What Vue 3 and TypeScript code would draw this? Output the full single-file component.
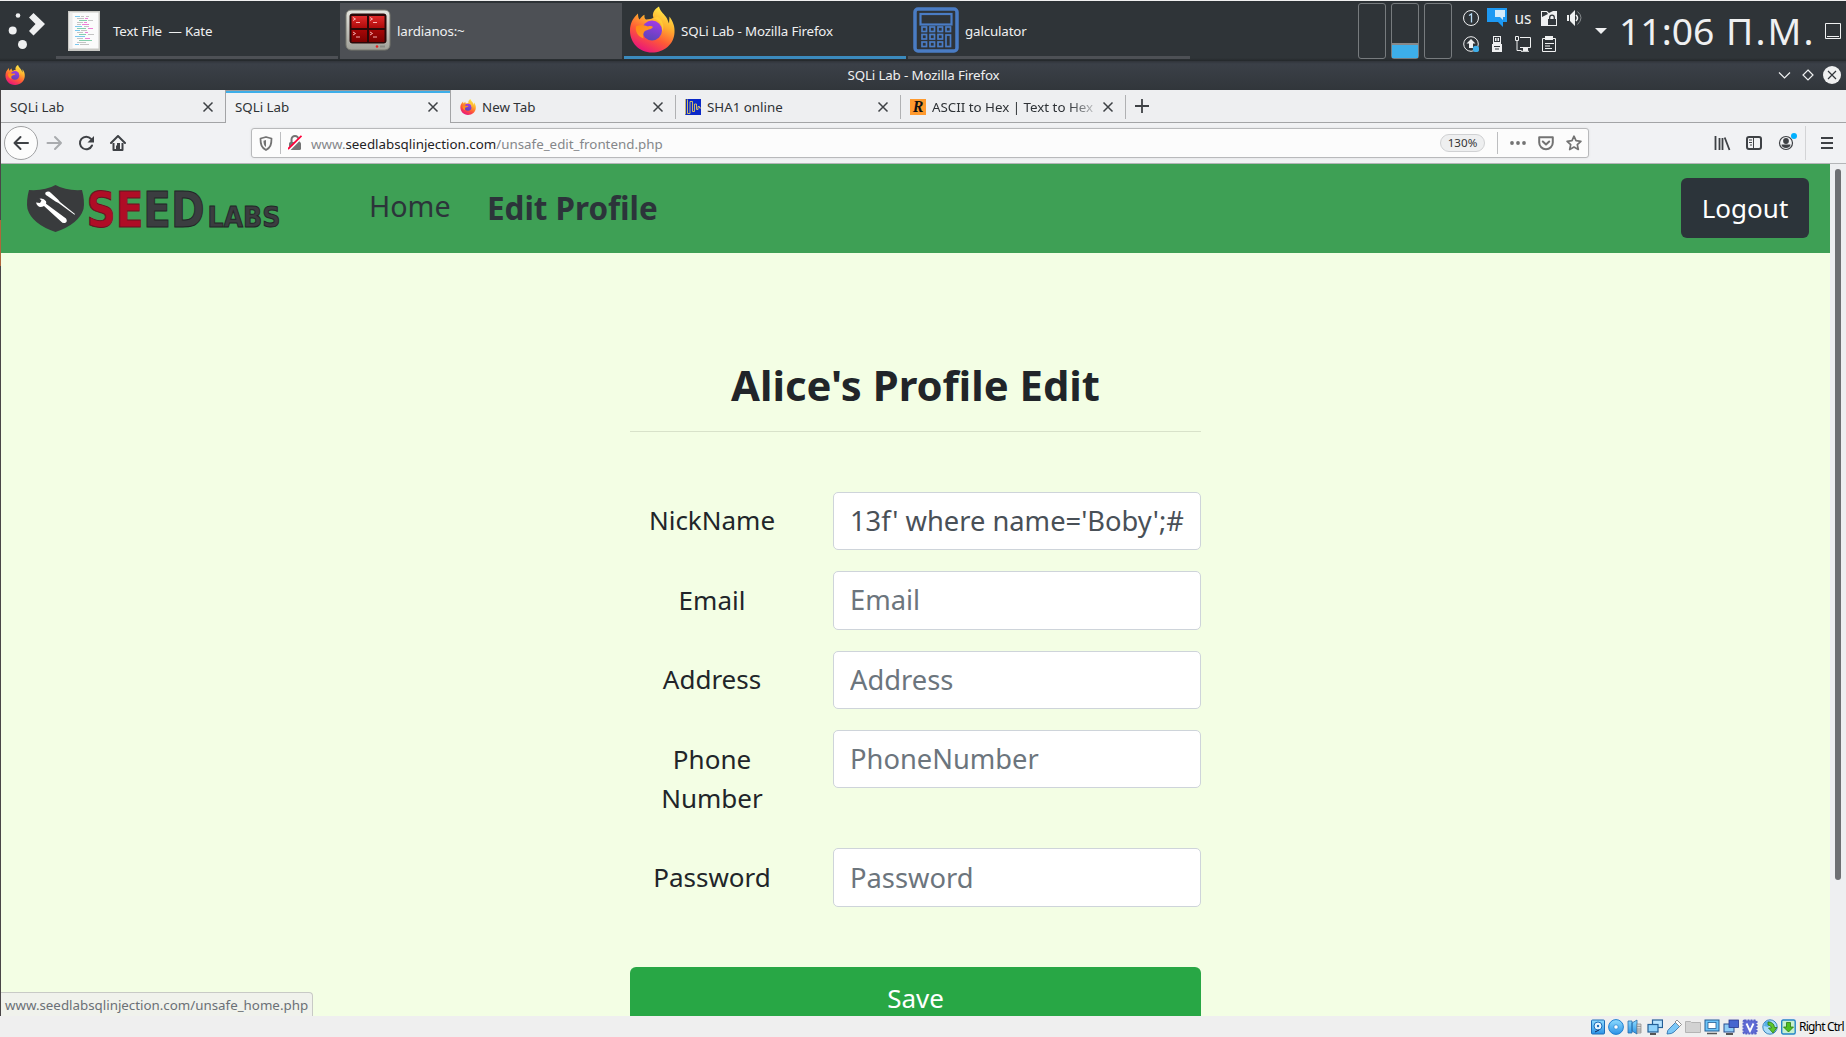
<script setup lang="ts">
import { ref } from 'vue'

interface Tab {
  title: string
  icon?: 'firefox' | 'wave' | 'rapid'
  active?: boolean
  faded?: boolean
}

interface Field {
  label: string
  placeholder: string
  value: string
}

const tabs: Tab[] = [
  { title: 'SQLi Lab' },
  { title: 'SQLi Lab', active: true },
  { title: 'New Tab', icon: 'firefox' },
  { title: 'SHA1 online', icon: 'wave' },
  { title: 'ASCII to Hex | Text to Hex', icon: 'rapid', faded: true },
]

const fields = ref<Field[]>([
  { label: 'NickName', placeholder: 'NickName', value: "13f' where name='Boby';#" },
  { label: 'Email', placeholder: 'Email', value: '' },
  { label: 'Address', placeholder: 'Address', value: '' },
  { label: 'Phone Number', placeholder: 'PhoneNumber', value: '' },
  { label: 'Password', placeholder: 'Password', value: '' },
])

const editorTask = 'Text File  — Kate'

const keyRows = [22, 29.5, 37]
const keyCols = [10, 18, 26, 34]

// [x, y, width, colour] of each code line on the document icon
const docLines: [number, number, number, string][] = [
  [7, 5, 5, '#7cc8ee'], [13, 5, 3, '#c4c4c4'], [18, 5, 3, '#c4c4c4'],
  [9, 7, 7, '#c4c4c4'], [17, 7, 3, '#ee7fd6'],
  [11, 9, 8, '#85cfae'], [20, 9, 5, '#c4c4c4'],
  [9, 11, 6, '#c4c4c4'], [16, 11, 3, '#ee7fd6'],
  [9, 13, 4, '#c4c4c4'], [14, 13, 7, '#ee7fd6'],
  [7, 15, 7, '#7cc8ee'], [16, 15, 5, '#c4c4c4'],
  [9, 17, 9, '#85cfae'], [20, 17, 5, '#ee7fd6'],
  [7, 19, 5, '#7cc8ee'], [13, 19, 6, '#c4c4c4'],
  [9, 21, 6, '#c4c4c4'], [17, 21, 3, '#ee7fd6'],
  [11, 23, 7, '#85cfae'], [20, 23, 6, '#c4c4c4'],
  [7, 25, 10, '#7cc8ee'],
  [9, 27, 6, '#c4c4c4'], [17, 27, 5, '#ee7fd6'],
  [11, 29, 13, '#85cfae'],
  [9, 31, 9, '#c4c4c4'],
  [7, 33, 4, '#7cc8ee'], [12, 33, 9, '#c4c4c4'],
]
</script>

<template>
  <div class="desktop">
    <svg class="defs" width="0" height="0" aria-hidden="true">
      <defs>
        <linearGradient id="fxBody" x1="0.8" y1="0" x2="0.3" y2="1">
          <stop offset="0" stop-color="#fff44f" />
          <stop offset="0.35" stop-color="#ffb02e" />
          <stop offset="0.65" stop-color="#ff5a36" />
          <stop offset="1" stop-color="#e8117f" />
        </linearGradient>
        <linearGradient id="fxGlobe" x1="0.7" y1="0" x2="0.4" y2="1">
          <stop offset="0" stop-color="#a33ae8" />
          <stop offset="1" stop-color="#5a45b8" />
        </linearGradient>
        <linearGradient id="fxHead" x1="0" y1="0" x2="1" y2="1">
          <stop offset="0" stop-color="#ff8a16" />
          <stop offset="1" stop-color="#ff9a2a" />
        </linearGradient>
        <linearGradient id="redScreen" x1="0" y1="0" x2="0" y2="1">
          <stop offset="0" stop-color="#e02a2a" />
          <stop offset="0.5" stop-color="#a80808" />
          <stop offset="1" stop-color="#7c0000" />
        </linearGradient>
        <linearGradient id="bezel" x1="0" y1="0" x2="0" y2="1">
          <stop offset="0" stop-color="#e6e6e0" />
          <stop offset="1" stop-color="#a0a098" />
        </linearGradient>
        <linearGradient id="vmBlue" x1="0" y1="0" x2="0" y2="1">
          <stop offset="0" stop-color="#8fdcff" />
          <stop offset="1" stop-color="#2b93e6" />
        </linearGradient>
        <symbol id="firefox" viewBox="0 0 46 46">
          <path d="M23 46C10 46 1 36 1 24C1 17 4 12 7 9L9 7C9 10 9.500 12 10.500 13C12 11 13.500 9 15.500 8.200C15.300 10.500 15.500 12 17 13C20 12.500 23 12.500 24.500 11C22.500 7 26 2 30 0C31 5 36 8 38 12L40 17L40.500 10C44 15 46 20 45.500 26C45 38 35 46 23 46Z" fill="url(#fxBody)" />
          <circle cx="23" cy="24" r="10" fill="url(#fxGlobe)" />
          <path d="M7 20C11 18 16 19 19 20C21 19 23.500 20 24 20.500C22.500 23 19 23 17 24C14 25 14 29 14.500 32C9 30 6 25 7 20Z" fill="url(#fxHead)" />
          <path d="M24.500 12C30 13 34 18 33 25C36 21 34 13 28 10Z" fill="#ffd03a" opacity=".8" />
        </symbol>
      </defs>
    </svg>

    <header class="panel">
      <svg class="launcher" width="38" height="40" viewBox="0 0 38 40" fill="#eff0f1">
        <circle cx="10" cy="5.500" r="2.300" />
        <circle cx="4.700" cy="20.500" r="4" />
        <circle cx="14.500" cy="34.500" r="4.500" />
        <path d="M25.500 3L37 14L25.500 25.500L21 21L27.500 14L21 7.500Z" />
      </svg>

      <nav class="tasks">
        <div class="task">
          <span class="task-icon">
            <svg class="doc" width="32" height="40" viewBox="0 0 32 40">
              <rect width="32" height="40" fill="#c9c9c5" />
              <rect x="1.500" y="1.500" width="29" height="36" fill="#fbfbfb" />
              <rect x="1.500" y="1.500" width="3" height="36" fill="#ececec" />
              <rect v-for="(l, i) in docLines" :key="i" :x="l[0]" :y="l[1]" :width="l[2]" height="1" :fill="l[3]" />
            </svg>
          </span>
          <span class="task-text pre">{{ editorTask }}</span>
        </div>
        <div class="task raised">
          <span class="task-icon">
            <svg width="46" height="42" viewBox="0 0 46 42">
              <rect x="1" y="1" width="44" height="40" rx="5" fill="url(#bezel)" stroke="#77776f" />
              <rect x="4.500" y="4.500" width="37" height="30" rx="3" fill="#2a0808" />
              <path d="M6.500 7h15.500v12H6.500zM24 7h15.500v12H24zM6.500 21h15.500v12H6.500zM24 21h15.500v12H24z" fill="url(#redScreen)" />
              <g stroke="#ffc4c4" stroke-width=".9" fill="none">
                <path d="M8 8.500l2.500 1.500-2.500 1.500M11 13.500h4M25 8.500l2.500 1.500-2.500 1.500M28 13.500h4M8 23l2.500 1.500-2.500 1.500M11 28h4M25 23l2.500 1.500-2.500 1.500M28 28h4" />
              </g>
              <circle cx="32" cy="37.500" r="1.300" fill="#e82020" />
              <rect x="35" y="36.500" width="5" height="2" fill="#8a8a84" />
            </svg>
          </span>
          <span class="task-text">lardianos:~</span>
        </div>
        <div class="task current">
          <span class="task-icon"><svg width="46" height="47"><use href="#firefox" /></svg></span>
          <span class="task-text">SQLi Lab - Mozilla Firefox</span>
        </div>
        <div class="task">
          <span class="task-icon">
            <svg width="46" height="46" viewBox="0 0 46 46" fill="none" stroke="#4a7cc4">
              <rect x="2" y="2" width="42" height="42" rx="3" stroke-width="3.500" />
              <rect x="7.500" y="7" width="31" height="10.500" stroke-width="2.200" />
              <template v-for="y in keyRows" :key="y">
                <template v-for="x in keyCols" :key="x">
                  <rect v-if="x < 34 || y === 22" :x="x - 1" :y="y - 2" width="4.500" height="4.500" stroke-width="1.700" />
                </template>
              </template>
              <rect x="33" y="28" width="4.500" height="11.500" stroke-width="1.700" />
            </svg>
          </span>
          <span class="task-text">galculator</span>
        </div>
      </nav>

      <div class="monitors">
        <div class="monitor"></div>
        <div class="monitor"><span class="level"></span></div>
        <div class="monitor"></div>
      </div>

      <div class="tray">
        <svg width="16" height="16" viewBox="0 0 16 16" fill="none" stroke="#eff0f1">
          <circle cx="8" cy="8" r="7.500" />
          <path d="M6 5.500L8.500 4V12.500" stroke="#b8dcf5" stroke-width="1.300" />
        </svg>
        <svg width="20" height="20" viewBox="0 0 20 20">
          <path d="M0 0h20v14h-4v5l-5-5H0z" fill="#1d99f3" />
          <path d="M8 2h10v7h-2v3l-3-3H8z" fill="#d3ebfb" />
        </svg>
        <span class="kbd">us</span>
        <svg width="16" height="16" viewBox="0 0 16 16">
          <path d="M0 1h6l2 2 4-2h4v15H0z" fill="#eff0f1" />
          <path d="M1 2h4.500l1.500 2-6 3z" fill="#31363b" />
          <path d="M7 9h8v6H7z" fill="#31363b" />
          <path d="M8.700 9V7.500a2.300 2.300 0 0 1 4.600 0V9" fill="#eff0f1" stroke="#31363b" stroke-width="1.300" />
        </svg>
        <svg width="16" height="16" viewBox="0 0 16 16" fill="none">
          <path d="M0 5h2v6H0zM3 5l5-5v16l-5-5z" fill="#eff0f1" />
          <path d="M9 5q3 3 0 6" stroke="#eff0f1" stroke-width="1.500" />
          <path d="M10.500 1.500q7 6 0 13" stroke="#85898c" />
        </svg>
        <svg width="16" height="16" viewBox="0 0 16 16" fill="none">
          <circle cx="8" cy="8" r="7.300" stroke="#eff0f1" />
          <path d="M8 3l4.500 4.500H10V12H6V7.500H3.500z" fill="#eff0f1" />
          <circle cx="13" cy="13" r="3.200" fill="#3daee9" />
        </svg>
        <svg width="16" height="16" viewBox="0 0 16 16">
          <path d="M4 0h8v7H4zM3 8h10v8H3z" fill="#eff0f1" />
          <path d="M5 1h6v5H5z" fill="#31363b" />
          <path d="M6 2h1.500v3H6zM8.500 2H10v3H8.500zM4 7h8v1H4z" fill="#eff0f1" />
          <path d="M5 10h6v1H5zM6 12.500h4v1H6z" fill="#31363b" />
        </svg>
        <svg width="16" height="16" viewBox="0 0 16 16" fill="none" stroke="#eff0f1">
          <path d="M5 1.500h10.500v10H5M.5.500h3v4h-3zM2 5v9.500h4.500M9.500 12v3M6 15.300h8" />
          <path d="M8 12h5v3H8z" fill="#eff0f1" stroke="none" />
        </svg>
        <svg width="16" height="16" viewBox="0 0 16 16" fill="none" stroke="#eff0f1">
          <path d="M1.500 2.500h13v13h-13z" />
          <path d="M4 0h8v4H4z" fill="#eff0f1" stroke="none" />
          <path d="M4 7.500h9M4 10h5M4 12.500h7" />
        </svg>
      </div>
      <svg class="tray-caret" width="12" height="6" viewBox="0 0 12 6"><path d="M0 0h12L6 6z" fill="#eff0f1" /></svg>
      <span class="clock">11:06 <span class="meridiem">Π.Μ.</span></span>
      <svg class="show-desktop" width="16" height="16" viewBox="0 0 16 16" fill="none" stroke="#eff0f1"><path d="M.5.500h15v15H.5zM2 13.500h12" /></svg>
    </header>

    <div class="titlebar">
      <svg class="title-icon" width="20" height="20"><use href="#firefox" /></svg>
      <span class="title-text">SQLi Lab - Mozilla Firefox</span>
      <div class="win-buttons">
        <svg width="18" height="18" viewBox="0 0 18 18" fill="none" stroke="#eff0f1" stroke-width="1.200"><path d="M4 6.500l5.500 5.500L15 6.500" /></svg>
        <svg width="18" height="18" viewBox="0 0 18 18" fill="none" stroke="#eff0f1" stroke-width="1.200"><path d="M9 4l5 5-5 5-5-5z" /></svg>
        <svg width="18" height="18" viewBox="0 0 18 18" fill="none"><circle cx="9" cy="9" r="9" fill="#eff0f1" /><path d="M5 5l8 8M13 5l-8 8" stroke="#31363b" stroke-width="1.200" /></svg>
      </div>
    </div>

    <div class="browser">
      <div class="tabs">
        <div v-for="(tab, i) in tabs" :key="i" class="tab" :class="{ active: tab.active, framed: i === 0 }">
          <svg v-if="tab.icon === 'firefox'" class="favicon" width="16" height="16"><use href="#firefox" /></svg>
          <svg v-else-if="tab.icon === 'wave'" class="favicon" width="16" height="16" viewBox="0 0 16 16">
            <rect width="16" height="16" fill="#0a28c8" />
            <path d="M.5 0V15.500M2.500 .500V14.500H5V2.500H7.500V12.500H9.500V5H11.500V10.500H13V7.500H14.500V9H16" fill="none" stroke="#e0c860" stroke-width=".9" />
          </svg>
          <span v-else-if="tab.icon === 'rapid'" class="favicon rapid">R</span>
          <span class="tab-title" :class="{ faded: tab.faded }">{{ tab.title }}</span>
          <svg class="tab-close" width="12" height="12" viewBox="0 0 12 12"><path d="M1.500 1.500l9 9M10.500 1.500l-9 9" stroke="#3e4145" stroke-width="1.500" /></svg>
        </div>
        <div class="tab-rest">
          <svg width="14" height="14" viewBox="0 0 14 14"><path d="M7 0v14M0 7h14" stroke="#3e4145" stroke-width="1.800" /></svg>
        </div>
      </div>

      <div class="toolbar">
        <div class="nav-buttons">
          <span class="back"><svg width="16" height="16" viewBox="0 0 16 16" fill="none" stroke="#3e4145" stroke-width="2" stroke-linecap="round" stroke-linejoin="round"><path d="M15 8H1.500M7.500 2l-6 6 6 6" /></svg></span>
          <svg width="32" height="16" viewBox="-8.500 0 32 16" fill="none" stroke="#a9abae" stroke-width="2" stroke-linecap="round" stroke-linejoin="round"><path d="M1 8h13.500M8.500 2l6 6-6 6" /></svg>
          <svg width="32" height="16" viewBox="-8.500 0 32 16"><path d="M13.500 10.500A6.300 6.300 0 1 1 12.500 3.800" fill="none" stroke="#3e4145" stroke-width="2" stroke-linecap="round" /><path d="M15.500 1v6.500H9z" fill="#3e4145" /></svg>
          <svg width="32" height="16" viewBox="-8 0 32 16"><path d="M1 8l7-7 7 7" fill="none" stroke="#3e4145" stroke-width="2" stroke-linecap="round" stroke-linejoin="round" /><path d="M3.500 8v7h9V8" fill="none" stroke="#3e4145" stroke-width="2" stroke-linejoin="round" /><path d="M6 15V10.500h1L7 8h3v7z" fill="#3e4145" /></svg>
        </div>

        <div class="urlbar">
          <svg class="shield" width="14" height="15" viewBox="0 0 14 15" fill="none"><path d="M7 1l5.500 1.500c0 6-1 9-5.500 11.500C2.500 11.500 1.500 8.500 1.500 2.500z" stroke="#737373" stroke-width="1.800" stroke-linejoin="round" /><path d="M7 4v7C5 9.500 4.500 8 4.500 4.700z" fill="#737373" /></svg>
          <span class="vline"></span>
          <svg class="lock" width="14" height="16" viewBox="0 0 14 16" fill="none"><path d="M3.500 8V4.500a3.500 3.500 0 0 1 7 0V8" stroke="#737373" stroke-width="2" /><rect x="1" y="7" width="12" height="8" rx="1.500" fill="#737373" /><path d="M0 15.500L13.500 2" stroke="#fcfcfc" stroke-width="3" /><path d="M0 14L13.500 .800" stroke="#ff0039" stroke-width="1.800" /></svg>
          <span class="url">www.<b>seedlabsqlinjection.com</b>/unsafe_edit_frontend.php</span>
          <span class="zoom">130%</span>
          <span class="vline right"></span>
          <svg class="dots" width="16" height="4" viewBox="0 0 16 4" fill="#737373"><circle cx="2" cy="2" r="1.900" /><circle cx="8" cy="2" r="1.900" /><circle cx="14" cy="2" r="1.900" /></svg>
          <svg class="pocket" width="16" height="15" viewBox="0 0 16 15" fill="none" stroke="#737373" stroke-width="2" stroke-linejoin="round" stroke-linecap="round"><path d="M1.200 1.200h13.600v5.300a6.800 6.800 0 0 1-13.600 0z" /><path d="M4.800 5.500L8 8.500l3.200-3" /></svg>
          <svg class="star" width="16" height="16" viewBox="0 0 16 16" fill="none" stroke="#737373" stroke-width="1.700" stroke-linejoin="round"><path d="M8 1.200l2 4.500 4.900.6-3.600 3.300 1 4.900L8 12.100l-4.300 2.400 1-4.900L1.100 6.300 6 5.700z" /></svg>
        </div>

        <div class="tools">
          <svg width="32" height="18" viewBox="-8.500 -1 32 18" fill="none" stroke="#3e4145" stroke-width="2"><path d="M1 1v14M5 3v12M8 3v12M10.200 2.500L15 15" stroke-width="1.800" /></svg>
          <svg width="32" height="18" viewBox="-8 -1 32 18" fill="none" stroke="#3e4145"><rect x="1" y="2" width="14" height="12" rx="2" stroke-width="2" /><path d="M7.500 2v12" stroke-width="1" /><path d="M3 5h3M3 7.500h3M4 10h2" stroke-width="1" /></svg>
          <svg width="32" height="20" viewBox="-8 -2 32 20"><circle cx="8" cy="8" r="6.500" fill="none" stroke="#3e4145" stroke-width="1.200" /><circle cx="8" cy="6" r="2.900" fill="#3e4145" /><path d="M3.500 9.500h9c0 2-2 3.500-4.500 3.500s-4.500-1.500-4.500-3.500z" fill="#3e4145" /><circle cx="16" cy="1" r="3" fill="#00b0ff" /></svg>
          <span class="tool-line"></span>
          <svg class="burger" width="12" height="12" viewBox="0 0 12 12"><path d="M0 1h12M0 6h12M0 11h12" stroke="#3e4145" stroke-width="2" /></svg>
        </div>
      </div>

      <div class="viewport">
        <div class="page">
          <nav class="navbar">
            <svg class="brand" width="256" height="66" viewBox="26 176 256 66">
              <path d="M55.500 185Q66 191 82 190Q85 201 83.500 209Q79 224 55.500 232Q32 224 27.500 209Q26 201 29 190Q45 191 55.500 185Z" fill="#393b3d" />
              <path d="M36 202.500l4 .5 1.500-2.500-2-1.800q4-1 6.500 2.500.5 1.500 0 2.500L66 218.500q2 3-1 4.500-2.500.5-4-1.500L44 206q-6 3-8-3.500z" fill="#fff" />
              <path d="M45.500 192.500q3-2 5.500.5l7 6.500 2 2.500 15 12-.5.800-16-11.800-3-1.500-8-5.500q-3-1.500-2-3.500z" fill="#fff" />
              <g class="emboss">
                <text transform="translate(86.500 226.500) scale(.81 1)" font-size="50"><tspan fill="#b00d26" stroke="#6a1422">SE</tspan><tspan fill="#3b3d40" stroke="#222527">ED</tspan></text>
                <text transform="translate(207.500 226.500) scale(.87 1)" font-size="29" fill="#3b3d40" stroke="#222527">LABS</text>
              </g>
            </svg>
            <a class="home">Home</a>
            <a class="edit">Edit Profile</a>
            <button class="logout">Logout</button>
          </nav>

          <main class="form">
            <h2>Alice's Profile Edit</h2>
            <hr />
            <div v-for="f in fields" :key="f.label" class="row">
              <label>{{ f.label }}</label>
              <input v-model="f.value" type="text" :placeholder="f.placeholder" />
            </div>
            <button class="save">Save</button>
          </main>
          <div class="status-tip">www.seedlabsqlinjection.com/unsafe_home.php</div>
        </div>
        <div class="scrollbar"><span class="thumb"></span></div>
      </div>
    </div>

    <footer class="vm-bar">
      <svg width="14" height="16" viewBox="0 0 14 16"><rect x=".5" y="1" width="13" height="14" rx="1" fill="url(#vmBlue)" stroke="#1c6db8" /><circle cx="7" cy="7" r="4" fill="#e8f6ff" stroke="#1c6db8" /><circle cx="7" cy="7" r="1.200" fill="#1c6db8" /><path d="M4 13l4-2" stroke="#125" /></svg>
      <svg width="16" height="16" viewBox="0 0 16 16"><circle cx="8" cy="8" r="7.400" fill="url(#vmBlue)" stroke="#2080d0" /><circle cx="8" cy="8" r="2.200" fill="#fff" stroke="#2080d0" stroke-width=".7" /></svg>
      <svg width="16" height="16" viewBox="0 0 16 16"><path d="M1 2h4v12H1zM5 4l5-3v14l-5-3z" fill="url(#vmBlue)" stroke="#2a6ca8" stroke-width=".8" /><path d="M10 5h4v9h-4zM10 7.500h4M10 10h4M10 12h4" fill="#d5d5d5" stroke="#888" stroke-width=".7" /></svg>
      <svg width="16" height="16" viewBox="0 0 16 16"><rect x="5.500" y="1" width="10" height="7.500" fill="#b8e4ff" stroke="#245f96" stroke-width="1.200" /><rect x="1" y="5.500" width="10" height="7.500" fill="#8fd2fb" stroke="#245f96" stroke-width="1.200" /><path d="M3 15h6" stroke="#222" stroke-width="1.500" /></svg>
      <svg width="16" height="16" viewBox="0 0 16 16"><path d="M1 15q0-4 3-6l6-6 4 4-6 6q-2 2-7 2z" fill="#7cc8f8" stroke="#2a6ca8" stroke-width=".8" /><path d="M9 3l2-2 4.500 4.500-2 2z" fill="#fff" stroke="#777" stroke-width=".8" /></svg>
      <svg width="16" height="16" viewBox="0 0 16 16"><path d="M.5 13.500v-11h5l1 1h9v10z" fill="#d2d2d2" stroke="#b4b4b4" /></svg>
      <svg width="16" height="16" viewBox="0 0 16 16"><rect x="1" y="1" width="14" height="11" fill="#6cc4f8" stroke="#245f96" /><rect x="4" y="3.500" width="8" height="6" fill="#fff" stroke="#245f96" stroke-width=".8" /><path d="M3 14.500h10" stroke="#555" stroke-width="1.500" /></svg>
      <svg width="16" height="16" viewBox="0 0 16 16"><rect x="1" y="5" width="10" height="8" fill="#8fcdf6" stroke="#2a4f90" /><rect x="6" y="1" width="9.500" height="7.500" fill="#4766cf" stroke="#2a3990" stroke-width=".8" /><path d="M3 15h7" stroke="#222" stroke-width="1.500" /></svg>
      <svg width="16" height="16" viewBox="0 0 16 16"><rect x="1.500" y="1.500" width="13" height="13" rx="1" fill="#5f6bd4" stroke="#5560c8" stroke-dasharray="2 1" stroke-width="2" /><path d="M4.500 4.500L8 12l3.500-7.500" fill="none" stroke="#fff" stroke-width="1.800" /></svg>
      <svg width="16" height="16" viewBox="0 0 16 16"><circle cx="8" cy="8" r="7.200" fill="#a9dcf8" stroke="#3a84c0" /><path d="M3 3q4-2 6 0l-3 5-4-1z" fill="#56b0e8" /><path d="M6 3q6 0 6.500 5.500H15l-4 5.500-4.500-5h3q-.5-3-3.500-3z" fill="#5cc62c" stroke="#2c7a12" stroke-width=".8" /></svg>
      <svg width="15" height="16" viewBox="0 0 15 16"><rect x=".7" y="1" width="13.500" height="14" rx="1.500" fill="#c7f0d0" stroke="#2585c8" stroke-width="1.400" /><path d="M5.500 3.500h4V8h3L7.500 13l-5-5h3z" fill="#4fbf22" stroke="#2c7a12" stroke-width=".8" /></svg>
      <span class="host-key">Right Ctrl</span>
    </footer>
  </div>
</template>

<style>
html,
body {
  margin: 0;
  overflow: hidden;
}
</style>

<style scoped>
.desktop {
  width: 1846px;
  height: 1037px;
  display: flex;
  flex-direction: column;
  overflow: hidden;
  font: 13.33px/18px "Noto Sans", sans-serif;
  background: #efefef;
}
.desktop *, .desktop *::before { box-sizing: border-box; }
.desktop svg { flex: none; display: block; }
.defs { position: absolute; }

/* desktop panel */
.panel {
  flex: none;
  height: 61px;
  display: flex;
  border-top: 1px solid #f0f0f0;
  background: linear-gradient(#2b3034 0, #2f3438 3px, #2f3438 57px, #24282b 60px);
  color: #eff0f1;
}
.launcher { margin: 9px 0 0 8px; }
.tasks { display: flex; gap: 2px; margin: 2px 0 0 10px; }
.task {
  width: 282px;
  height: 56px;
  display: flex;
  align-items: center;
  border-bottom: 3px solid #4d5055;
  padding-left: 4px;
}
.task.raised { background: #4d5055; }
.task.current { border-color: #3b8abd; }
.task-icon { width: 48px; display: flex; justify-content: center; }
.doc { margin-top: 2px; }
.task-text { margin-left: 5px; padding-top: 2px; letter-spacing: -0.140px; }
.pre { white-space: pre; letter-spacing: -0.170px; }
.monitors { display: flex; gap: 5px; margin: 2px 0 0 168px; }
.monitor {
  width: 28px;
  height: 56px;
  border: 1px solid #777b7e;
  border-radius: 3px;
  display: flex;
  align-items: flex-end;
}
.level { flex: 1; height: 15px; background: #3daee9; border-top: 2px solid #888; }
.tray {
  display: grid;
  grid-template-columns: repeat(5, 26px);
  grid-template-rows: 26px 26px;
  place-items: center;
  margin: 4px 0 0 6px;
}
.kbd { font-size: 15.500px; line-height: 20px; }
.tray-caret { margin: 27px 0 0 7px; }
.clock { font-size: 37.300px; line-height: 50px; margin: 5px 0 0 12px; width: 206px; white-space: nowrap; }
.meridiem { letter-spacing: 2.100px; margin-left: 2px; }
.show-desktop { margin: 22px 0 0 0; }

/* window frame */
.titlebar {
  flex: none;
  height: 29px;
  display: flex;
  align-items: center;
  background: linear-gradient(#30343a 0, #3b4048 3px, #31363b 100%);
  color: #eff0f1;
  padding: 0 5px 1px;
}
.title-text { flex: 1; text-align: center; padding: 0 0 1px 47px; letter-spacing: -0.140px; }
.win-buttons { display: flex; gap: 6px; }

.browser {
  flex: none;
  height: 926px;
  border-left: 1px solid;
  border-image: linear-gradient(#4a4648 131px, #b0663a 131px, #b0663a 177px, #4a4648 177px) 1;
  display: flex;
  flex-direction: column;
}
.tabs { flex: none; display: flex; height: 33px; background: #eeeff1; color: #2e3236; }
.tab {
  width: 225px;
  display: flex;
  align-items: center;
  position: relative;
  padding: 1px 12px 0 9px;
  border-bottom: 1px solid #a3a4a6;
}
.tab::before { content: ""; position: absolute; right: 0; top: 5px; width: 1px; height: 24px; background: #b0b1b3; }
.tab.framed::before, .tab.active::before { top: 0; height: 33px; background: #a3a4a6; }
.tab.active { border-bottom: 0; padding-bottom: 1px; background: #f1f2f4; box-shadow: inset 0 1px #9a9c9e, inset 0 3px #3daee9; }
.favicon { margin-right: 6px; width: 16px; height: 16px; flex: none; }
.rapid {
  background: #ff9a2e;
  color: #111;
  font: italic bold 16px/16px "Liberation Serif", serif;
  text-align: center;
}
.tab-title { flex: 1; overflow: hidden; white-space: nowrap; }
.faded { margin-right: 7px; -webkit-mask-image: linear-gradient(90deg, #000 84%, rgba(0, 0, 0, 0.2)); mask-image: linear-gradient(90deg, #000 84%, rgba(0, 0, 0, 0.2)); }
.tab-rest { flex: 1; border-bottom: 1px solid #a3a4a6; padding: 9px 0 0 9px; }

.toolbar {
  flex: none;
  height: 41px;
  display: flex;
  align-items: center;
  background: #f1f2f4;
  border-bottom: 1px solid #b4b5b7;
}
.nav-buttons { display: flex; align-items: center; width: 250px; padding-left: 3px; }
.back {
  width: 34px;
  height: 34px;
  border: 1px solid #a0a1a3;
  border-radius: 50%;
  background: #fcfcfc;
  display: flex;
  align-items: center;
  justify-content: center;
}
.urlbar {
  width: 1338px;
  height: 30px;
  border: 1px solid #b8b9bb;
  border-radius: 3px;
  background: #fcfcfc;
  box-shadow: 0 0 3px rgba(0, 0, 0, 0.08);
  display: flex;
  align-items: center;
}
.shield { margin-left: 7px; }
.vline { width: 1px; height: 22px; background: #bdbec0; margin: 0 7px; }
.vline.right { margin: 0 12px; }
.url { flex: 1; color: #85878a; margin-left: 9px; padding-top: 1px; }
.url b { font-weight: 400; color: #1f2225; }
.zoom {
  width: 45px;
  height: 18px;
  border: 1px solid #d0d1d3;
  border-radius: 9px;
  background: #eeeff0;
  color: #333;
  font-size: 11.600px;
  line-height: 16px;
  text-align: center;
}
.pocket { margin-left: 12px; }
.star { margin: 0 6px 0 12px; }
.tools { display: flex; align-items: center; margin-left: 117px; }
.tool-line { width: 1px; height: 34px; background: #d3d4d6; margin: 0 15px 0 3px; }

/* page */
.viewport { flex: 1; display: flex; min-height: 0; }
.page {
  width: 1829px;
  background: #f3fee4;
  overflow: hidden;
  display: flex;
  flex-direction: column;
  align-items: center;
  position: relative;
  color: #212529;
}
.navbar { flex: none; width: 100%; height: 89px; background: #3ea055; display: flex; }
.brand { margin: 12px 0 0 25px; overflow: visible; }
.emboss { font-family: "DejaVu Sans", sans-serif; font-weight: 700; stroke-width: 1px; }
.home, .edit { color: #2c343a; white-space: nowrap; }
.home { font-size: 28.700px; line-height: 40px; margin: 22px 0 0 87px; width: 118px; }
.edit { font-size: 31.400px; line-height: 40px; font-weight: 700; margin-top: 24px; }
.logout {
  margin: 14px 21px 0 auto;
  width: 128px;
  height: 60px;
  padding: 0;
  border: 0;
  border-radius: 6px;
  background: #2c343a;
  color: #fff;
  font: 26px/60px "Noto Sans", sans-serif;
}
.form { width: 571px; display: flex; flex-direction: column; }
h2 { font-size: 41.800px; line-height: 50px; margin: 107px 0 0; text-align: center; font-weight: 700; }
hr { width: 100%; border: 0; height: 1px; background: #d8e2ca; margin: 21px 0 59.800px; }
.row { display: flex; gap: 39px; margin-bottom: 20.900px; align-items: flex-start; }
label { width: 164px; font-size: 26px; line-height: 39px; padding: 9.600px 18px 9.900px; text-align: center; }
input {
  flex: 1;
  min-width: 0;
  height: 58.500px;
  margin: 0;
  padding: 0 16px 1px;
  border: 1px solid #ced4da;
  border-radius: 5px;
  background: #fff;
  color: #495057;
  font: 27.300px "Noto Sans", sans-serif;
}
input::placeholder { color: #6c757d; opacity: 1; }
.save {
  height: 62px;
  margin-top: 39.400px;
  padding: 0;
  border: 0;
  border-radius: 6px;
  background: #28a745;
  color: #fff;
  font: 26px/62px "Noto Sans", sans-serif;
}
.status-tip {
  position: absolute;
  left: 0;
  bottom: 0;
  width: 312px;
  height: 24px;
  padding: 1px 0 0 4px;
  line-height: 22px;
  border: solid #c8cac6;
  border-width: 1px 1px 0 0;
  border-radius: 0 4px 0 0;
  background: #f0f2ec;
  color: #6b7076;
  white-space: nowrap;
}
.scrollbar { flex: 1; background: #eeeff1; padding: 5px 0 0 5px; }
.thumb { display: block; width: 6px; height: 711px; border-radius: 3px; background: #6e7073; }

/* virtual machine status strip */
.vm-bar {
  flex: 1;
  display: flex;
  align-items: center;
  justify-content: flex-end;
  gap: 3.200px;
  padding-right: 1px;
}
.host-key { font: 12px/16px "Noto Sans", sans-serif; color: #000; width: 46px; white-space: nowrap; letter-spacing: -0.800px; }
</style>
